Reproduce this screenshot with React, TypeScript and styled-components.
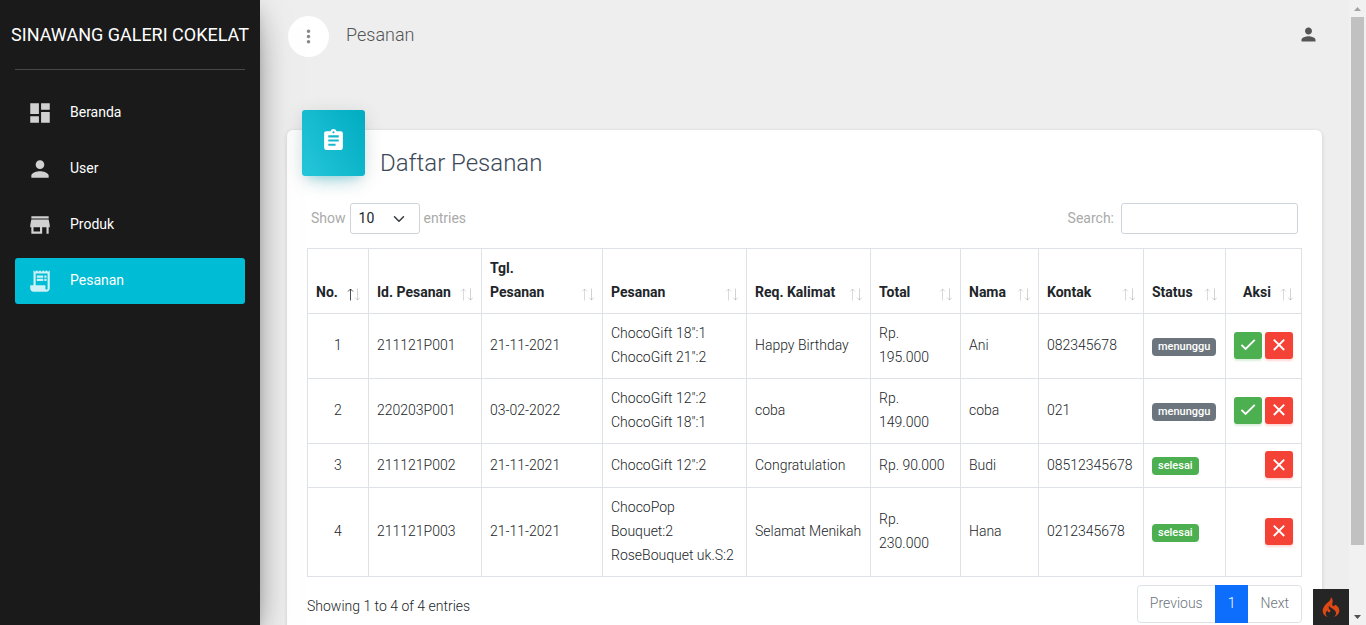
import React from "react";
import styled, { createGlobalStyle, css } from "styled-components";
import {
  MdAssignment,
  MdDashboard,
  MdMoreVert,
  MdPerson,
  MdStore,
} from "react-icons/md";
import { SiCodeigniter } from "react-icons/si";

const GlobalStyle = createGlobalStyle`
  *, *::before, *::after { box-sizing: border-box; }
  body {
    margin: 0;
    background: #eee;
    color: #212529;
    font-family: Roboto, "Liberation Sans", sans-serif;
    font-size: 14px;
    font-weight: 300;
    line-height: 24px;
  }
  button, input, select { font: inherit; margin: 0; }
  a { color: inherit; text-decoration: none; }
`;

const Shell = styled.div`
  display: grid;
  grid-template-columns: 260px minmax(0, 1fr) 17px;
  height: 100vh;
  overflow: hidden;
`;

const Sidebar = styled.aside`
  position: relative;
  z-index: 2;
  padding: 0 15px;
  background: #1a1a1a;
  color: #fff;
  box-shadow: 0 16px 38px -12px rgba(0, 0, 0, 0.56),
    0 4px 25px 0 rgba(0, 0, 0, 0.12), 0 8px 10px -5px rgba(0, 0, 0, 0.2);
`;

const Brand = styled.a`
  display: flex;
  align-items: center;
  justify-content: center;
  height: 70px;
  border-bottom: 1px solid #484848;
  font-size: 18px;
  font-weight: 400;
  white-space: nowrap;
`;

const Nav = styled.nav`
  display: flex;
  flex-direction: column;
  gap: 10px;
  padding-top: 20px;
`;

const NavLink = styled.a<{ $active?: boolean }>`
  display: flex;
  align-items: center;
  gap: 17px;
  height: 46px;
  padding: 0 12px;
  border-radius: 3px;
  font-weight: 400;
  background: ${(p) => (p.$active ? "#00bcd4" : "transparent")};
  svg { width: 26px; height: 26px; opacity: 0.8; }
  span { padding-bottom: 2px; }
`;

const Main = styled.main`
  overflow-y: auto;
  scrollbar-width: none;
  padding: 0 27px 30px;
`;

const TopBar = styled.header`
  display: flex;
  align-items: center;
  gap: 17px;
  height: 73px;
  padding: 0 1px;
`;

const MenuButton = styled.button`
  display: grid;
  place-items: center;
  width: 41px;
  height: 41px;
  padding: 0;
  border: 0;
  border-radius: 50%;
  background: #fff;
  color: #888;
`;

const PageName = styled.h2`
  flex: 1;
  margin: 0;
  padding-bottom: 4px;
  font-size: 18px;
  font-weight: 300;
  color: #555;
`;

const ProfileLink = styled.a`
  display: flex;
  padding: 0 2px 5px;
  color: #555;
`;

const Card = styled.section`
  margin-top: 57px;
  padding: 0 20px 40px;
  border-radius: 6px;
  background: #fff;
  box-shadow: 0 1px 4px 0 rgba(0, 0, 0, 0.14);
`;

const CardHeader = styled.div`
  display: flex;
  gap: 15px;
  height: 73px;
  margin-left: -5px;
`;

const CardIcon = styled.div`
  display: flex;
  justify-content: center;
  width: 63px;
  height: 66px;
  margin-top: -20px;
  padding-top: 18px;
  border-radius: 3px;
  color: #fff;
  background: linear-gradient(60deg, #26c6da, #00acc1);
  box-shadow: 0 12px 20px -10px rgba(0, 188, 212, 0.28),
    0 4px 20px 0 rgba(0, 0, 0, 0.12), 0 7px 8px -5px rgba(0, 188, 212, 0.2);
`;

const CardTitle = styled.h4`
  margin: 0;
  padding-top: 17px;
  font-size: 24px;
  line-height: 32px;
  font-weight: 300;
  color: #3c4858;
`;

const Controls = styled.div`
  display: flex;
  justify-content: space-between;
  padding: 0 4px;
  margin-bottom: 14px;
`;

const ControlLabel = styled.label<{ $gap: number }>`
  display: flex;
  align-items: center;
  gap: ${(p) => p.$gap}px;
  font-weight: 400;
  color: #aaa;
`;

const ControlText = styled.span`
  padding-bottom: 2px;
`;

const fieldStyle = css`
  height: 31px;
  border: 1px solid #ced4da;
  border-radius: 3px;
  background-color: #fff;
  color: #212529;
`;

const SelectWrap = styled.span`
  display: grid;
  align-items: center;
  select, svg { grid-area: 1 / 1; }
  svg { justify-self: end; margin-right: 15px; pointer-events: none; }
`;

const LengthSelect = styled.select`
  ${fieldStyle}
  appearance: none;
  width: 70px;
  padding: 0 8px 2px;
`;

const SearchInput = styled.input`
  ${fieldStyle}
  width: 177px;
  padding: 0 8px;
`;

const DataTable = styled.table`
  width: 100%;
  table-layout: fixed;
  border-collapse: collapse;
  th, td {
    padding: 7px 8px 9px;
    border: 1px solid #dee2e6;
    text-align: left;
  }
  th { vertical-align: bottom; font-weight: 700; }
  td { vertical-align: middle; }
  tbody td:first-child { text-align: center; }
  tbody td:last-child { padding-left: 0; }
`;

const HeadCell = styled.div<{ $center?: boolean }>`
  display: flex;
  align-items: flex-end;
  justify-content: space-between;
  white-space: nowrap;
  span { flex: 1; text-align: ${(p) => (p.$center ? "center" : "left")}; }
  svg { flex: none; margin-bottom: 3px; }
`;

const Badge = styled.span<{ $done: boolean }>`
  display: block;
  width: fit-content;
  margin-top: 3px;
  padding: 0 6px;
  border-radius: 4px;
  font-size: 11px;
  line-height: 18px;
  font-weight: 500;
  color: #fff;
  background: ${(p) => (p.$done ? "#4caf50" : "#6c757d")};
`;

const Actions = styled.div`
  display: flex;
  justify-content: flex-end;
  gap: 3px;
`;

const ActionButton = styled.button<{ $tone: "accept" | "reject" }>`
  display: grid;
  place-items: center;
  width: 28px;
  height: 27px;
  padding: 0;
  border: 0;
  border-radius: 3px;
  color: #fff;
  background: ${(p) => (p.$tone === "accept" ? "#4caf50" : "#f44336")};
  box-shadow: 0 2px 2px 0
    ${(p) => (p.$tone === "accept" ? "rgba(76, 175, 80, 0.2)" : "rgba(244, 67, 54, 0.2)")};
`;

const TableFooter = styled.div`
  display: flex;
  align-items: center;
  justify-content: space-between;
  margin-top: 8px;
`;

const Info = styled.div`
  padding-top: 4px;
`;

const Pagination = styled.nav`
  display: flex;
  height: 38px;
  border: 1px solid #dee2e6;
  border-radius: 4px;
`;

const PageLink = styled.a<{ $current?: boolean }>`
  padding: 5px 12px;
  color: #6c757d;
  ${(p) =>
    p.$current &&
    css`
      margin: -1px 0;
      padding: 6px 13px;
      color: #fff;
      background: #0d6efd;
    `}
`;

const ScrollTrack = styled.div`
  display: flex;
  flex-direction: column;
  align-items: center;
  background: #f1f1f1;
`;

const ScrollThumb = styled.div`
  width: 13px;
  flex: 528 1 0;
  background: #c1c1c1;
`;

const ScrollRest = styled.div`
  flex: 63 1 0;
`;

const DebugButton = styled.button`
  position: fixed;
  z-index: 5;
  right: 17px;
  bottom: 0;
  display: grid;
  place-items: center;
  width: 36px;
  height: 36px;
  padding: 0;
  border: 0;
  background: #252525;
  color: #dd4814;
`;

const ReceiptIcon = () => (
  <svg viewBox="0 0 24 24" fill="currentColor" aria-hidden="true">
    <path
      fillRule="evenodd"
      d="M19.5 3.5L18 2l-1.5 1.5L15 2l-1.5 1.5L12 2l-1.5 1.5L9 2 7.5 3.5 6 2v14H3v3c0 1.66 1.34 3 3 3h12c1.66 0 3-1.34 3-3V2l-1.5 1.5zM19 19c0 .55-.45 1-1 1s-1-.45-1-1v-3H8V5h11v14z"
    />
    <path d="M9 7h6v2H9zM16 7h2v2h-2zM9 10h6v2H9zM16 10h2v2h-2z" />
  </svg>
);

const CheckIcon = () => (
  <svg width="20" height="20" viewBox="0 0 20 20" fill="none" stroke="currentColor" strokeWidth="1.9" aria-hidden="true">
    <path d="M3.4 9.8L7.6 14L16.8 4.8" />
  </svg>
);

const CrossIcon = () => (
  <svg width="20" height="20" viewBox="0 0 20 20" fill="none" stroke="currentColor" strokeWidth="1.9" aria-hidden="true">
    <path d="M4.8 4.6L15.2 15M15.2 4.6L4.8 15" />
  </svg>
);

const navItems = [
  { label: "Beranda", Icon: MdDashboard },
  { label: "User", Icon: MdPerson },
  { label: "Produk", Icon: MdStore },
  { label: "Pesanan", Icon: ReceiptIcon, active: true },
];

const columns = [
  { label: "No.", width: 61 },
  { label: "Id. Pesanan", width: 113 },
  { label: "Tgl.\nPesanan", width: 121 },
  { label: "Pesanan", width: 144 },
  { label: "Req. Kalimat", width: 124 },
  { label: "Total", width: 90 },
  { label: "Nama", width: 78 },
  { label: "Kontak", width: 105 },
  { label: "Status", width: 82 },
  { label: "Aksi", width: 76 },
];

const orders = [
  { id: "211121P001", date: "21-11-2021", items: ['ChocoGift 18":1', 'ChocoGift 21":2'], note: "Happy Birthday", total: "Rp. 195.000", name: "Ani", phone: "082345678", status: "menunggu" },
  { id: "220203P001", date: "03-02-2022", items: ['ChocoGift 12":2', 'ChocoGift 18":1'], note: "coba", total: "Rp. 149.000", name: "coba", phone: "021", status: "menunggu" },
  { id: "211121P002", date: "21-11-2021", items: ['ChocoGift 12":2'], note: "Congratulation", total: "Rp. 90.000", name: "Budi", phone: "08512345678", status: "selesai" },
  { id: "211121P003", date: "21-11-2021", items: ["ChocoPop Bouquet:2", "RoseBouquet uk.S:2"], note: "Selamat Menikah", total: "Rp. 230.000", name: "Hana", phone: "0212345678", status: "selesai" },
];

const Lines = ({ lines }: { lines: string[] }) => (
  <>
    {lines.map((line, i) => (
      <React.Fragment key={line}>
        {i > 0 && <br />}
        {line}
      </React.Fragment>
    ))}
  </>
);

const SortArrows = ({ active }: { active?: boolean }) => (
  <svg width="13" height="13" viewBox="0 0 13 13" fill="none" stroke="#212529" aria-hidden="true">
    <path d="M3.5 12.5V1M1 3.5L3.5 1L6 3.5" opacity={active ? 0.8 : 0.17} />
    <path d="M10.5 0.5V12M8 9.5L10.5 12L13 9.5" opacity="0.2" />
  </svg>
);

const ScrollArrow = ({ down }: { down?: boolean }) => (
  <svg width="17" height="17" viewBox="0 0 17 17" aria-hidden="true">
    <path d={down ? "M5 7h7l-3.5 4z" : "M5 11h7l-3.5 -4z"} fill={down ? "#505050" : "#a3a3a3"} />
  </svg>
);

export default function App() {
  return (
    <>
      <GlobalStyle />
      <Shell>
        <Sidebar>
          <Brand href="#">SINAWANG GALERI COKELAT</Brand>
          <Nav>
            {navItems.map(({ label, Icon, active }) => (
              <NavLink key={label} href="#" $active={active}>
                <Icon />
                <span>{label}</span>
              </NavLink>
            ))}
          </Nav>
        </Sidebar>

        <Main>
          <TopBar>
            <MenuButton aria-label="Menu">
              <MdMoreVert size={21} />
            </MenuButton>
            <PageName>Pesanan</PageName>
            <ProfileLink href="#" aria-label="Profil">
              <MdPerson size={21} />
            </ProfileLink>
          </TopBar>

          <Card>
            <CardHeader>
              <CardIcon>
                <MdAssignment size={25} />
              </CardIcon>
              <CardTitle>Daftar Pesanan</CardTitle>
            </CardHeader>

            <Controls>
              <ControlLabel $gap={4}>
                <ControlText>Show</ControlText>
                <SelectWrap>
                  <LengthSelect defaultValue="10">
                    <option>10</option>
                    <option>25</option>
                    <option>50</option>
                    <option>100</option>
                  </LengthSelect>
                  <svg width="12" height="12" viewBox="0 0 16 16" fill="none" stroke="#343a40" strokeWidth="2" strokeLinecap="round" strokeLinejoin="round">
                    <path d="M2 5l6 6 6-6" />
                  </svg>
                </SelectWrap>
                <ControlText>entries</ControlText>
              </ControlLabel>
              <ControlLabel $gap={7}>
                <ControlText>Search:</ControlText>
                <SearchInput type="search" />
              </ControlLabel>
            </Controls>

            <DataTable>
              <colgroup>
                {columns.map((c) => (
                  <col key={c.label} width={c.width} />
                ))}
              </colgroup>
              <thead>
                <tr>
                  {columns.map((c, i) => (
                    <th key={c.label} scope="col">
                      <HeadCell $center={c.label === "Aksi"}>
                        <span>
                          <Lines lines={c.label.split("\n")} />
                        </span>
                        <SortArrows active={i === 0} />
                      </HeadCell>
                    </th>
                  ))}
                </tr>
              </thead>
              <tbody>
                {orders.map((o, i) => (
                  <tr key={o.id}>
                    <td>{i + 1}</td>
                    <td>{o.id}</td>
                    <td>{o.date}</td>
                    <td>
                      <Lines lines={o.items} />
                    </td>
                    <td>{o.note}</td>
                    <td>{o.total}</td>
                    <td>{o.name}</td>
                    <td>{o.phone}</td>
                    <td>
                      <Badge $done={o.status === "selesai"}>{o.status}</Badge>
                    </td>
                    <td>
                      <Actions>
                        {o.status === "menunggu" && (
                          <ActionButton $tone="accept" aria-label="Selesai">
                            <CheckIcon />
                          </ActionButton>
                        )}
                        <ActionButton $tone="reject" aria-label="Hapus">
                          <CrossIcon />
                        </ActionButton>
                      </Actions>
                    </td>
                  </tr>
                ))}
              </tbody>
            </DataTable>

            <TableFooter>
              <Info>Showing 1 to 4 of 4 entries</Info>
              <Pagination aria-label="Halaman">
                <PageLink href="#">Previous</PageLink>
                <PageLink href="#" $current>1</PageLink>
                <PageLink href="#">Next</PageLink>
              </Pagination>
            </TableFooter>
          </Card>
        </Main>

        <ScrollTrack aria-hidden="true">
          <ScrollArrow />
          <ScrollThumb />
          <ScrollRest />
          <ScrollArrow down />
        </ScrollTrack>
      </Shell>
      <DebugButton aria-label="Debug">
        <SiCodeigniter size={20} />
      </DebugButton>
    </>
  );
}
